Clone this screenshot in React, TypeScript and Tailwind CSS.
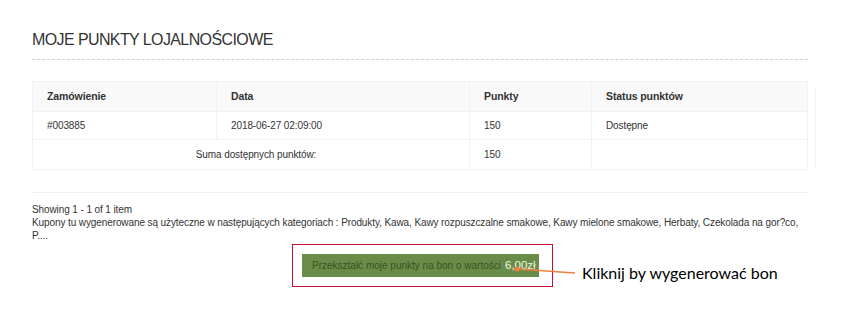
const ROWS = [{ order: "#003885", date: "2018-06-27 02:09:00", points: "150", status: "Dostępne" }];

export default function App() {
  return (
    <div className="relative h-[312px] w-[841px] overflow-hidden bg-white font-['Liberation_Sans',Arial,sans-serif] text-[#333]">
      <div className="ml-[32px] w-[776px] pt-[30px]">
        <h1 className="text-[16px] leading-[20px] tracking-[-0.6px] text-[#333]">MOJE PUNKTY LOJALNOŚCIOWE</h1>
        <div className="mt-[9px] border-t border-dashed border-[#cfcfcf]" />

        <div className="mt-[21px] flex">
          <table className="w-[776px] shrink-0 border-collapse border border-[#f2f2f2] text-[10px] tracking-[-0.1px]">
            <thead>
              <tr className="h-[30px] bg-[#f9f9f9]">
                <th className="w-[184px] border border-[#f2f2f2] pl-[14px] text-left text-[10.5px] font-bold">Zamówienie</th>
                <th className="w-[253px] border border-[#f2f2f2] pl-[14px] text-left text-[10.5px] font-bold">Data</th>
                <th className="w-[122px] border border-[#f2f2f2] pl-[14px] text-left text-[10.5px] font-bold">Punkty</th>
                <th className="border border-[#f2f2f2] pl-[14px] text-left text-[10.5px] font-bold">Status punktów</th>
              </tr>
            </thead>
            <tbody>
              {ROWS.map((r) => (
                <tr key={r.order} className="h-[28px]">
                  <td className="border border-[#f2f2f2] pl-[14px]">{r.order}</td>
                  <td className="border border-[#f2f2f2] pl-[14px]">{r.date}</td>
                  <td className="border border-[#f2f2f2] pl-[14px]">{r.points}</td>
                  <td className="border border-[#f2f2f2] pl-[14px]">{r.status}</td>
                </tr>
              ))}
              <tr className="h-[30px]">
                <td colSpan={2} className="border border-[#f2f2f2] pl-[10px] text-center">
                  Suma dostępnych punktów:
                </td>
                <td className="border border-[#f2f2f2] pl-[14px]">150</td>
                <td className="border border-[#f2f2f2]" />
              </tr>
            </tbody>
          </table>
          <div className="ml-[7px] mt-[6px] h-[80px] w-px shrink-0 bg-[#f0f0f0]" />
        </div>

        <div className="mt-[22px] border-t border-[#f0f0f0]" />
        <div className="mt-[10px] text-[10px] leading-[13px] tracking-[-0.1px]">
          <p>Showing 1 - 1 of 1 item</p>
          <p className="pr-[4px]">
            Kupony tu wygenerowane są użyteczne w następujących kategoriach : Produkty, Kawa, Kawy rozpuszczalne smakowe, Kawy mielone smakowe, Herbaty, Czekolada na gor?co, P....
          </p>
        </div>

        <div className="ml-[260px] mt-[2px] w-[261px] border border-[#c8102e] px-[9px] py-[9px]">
          <button className="flex h-[23px] w-[237px] items-center whitespace-nowrap bg-[#6a8c49] pl-[10px] text-[10px] text-[#3a5226]">
            Przekształć moje punkty na bon o wartości
            <span className="ml-[4px] text-[11.5px] text-[#eef5e0]">6,00zł</span>
          </button>
        </div>
      </div>

      <svg className="absolute left-[508px] top-[260px]" width="76" height="20" viewBox="0 0 76 20">
        <line x1="9" y1="9" x2="67" y2="13" stroke="#f0803c" strokeWidth="1.5" />
        <circle cx="9" cy="9" r="2.5" fill="#f0803c" />
      </svg>
      <span className="absolute left-[582px] top-[263px] font-['Lato',Calibri,sans-serif] text-[16px] leading-[20px] text-black">
        Kliknij by wygenerować bon
      </span>
    </div>
  );
}
